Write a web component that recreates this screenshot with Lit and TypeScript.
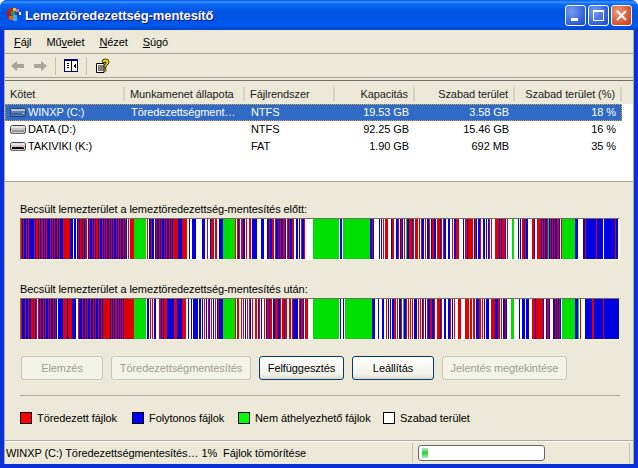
import { LitElement, css, html, svg } from 'lit';
import { customElement } from 'lit/decorators.js';

const COLORS: Record<string, string> = { r: '#e00000', b: '#0000e0', g: '#00e000', w: '#ffffff' };

// each section is [start x, runs]; later sections overwrite earlier pixels
type Section = [number, string];

const BEFORE: Section[] = [
  [21, 'r1 b1 r1 b2 r1 b1 r1'],
  [29, 'b5'],
  [34, 'r1 b1 r2 b1 r1 b1 r2 b1 r1 b1 r1 b1'],
  [48, 'b2 r1 b1 r1 b1 r1 b2'],
  [57, 'r1 b1 r1 b4'],
  [63, 'r7 b3 w1 b2 w1 b1'],
  [78, 'r1 b1 r2 b1 r1 b1 r2 w1'],
  [88, 'b1 r1 b2 r1 b1 r1 b1 r2 b1 r1 b2 r1 b1 r1 b1 r1 b2 r1 b1 r1 b1 r1 b2 r1 b1 r1 b1 r1 b2 r1 b1 r1 b1 w1 r1 w1 r1'],
  [131, 'r3'],
  [134, 'g12'],
  [146, 'w1 r1 w1 b2 r1 b2 w1'],
  [155, 'b1 r1 b2 r1 b1 r1 b2 r1 b1 r1 b2 r1 b1 r1 b1'],
  [173, 'r5 b4 r1 r4 w2 b1 w2 b4 w6 b3 w2 r1 w2 b1 r3 w1 r2 w1'],
  [219, 'b4'],
  [223, 'g12 r1 w1 r1 b1 r1 w1 r2 b2 w1 r1 w2 r2 w1 b5 w3 w1 b3 w3 b2 r1 b2 r2 w1 r1 b2 r1 b1 r1 b2 r2 b1 w1 r1 b1 r1 b2 r2 w2 b2 w1 b1 w1 r1 b2 r1 w1'],
  [313, 'g26 w1 b2 w1 g27 b2 r1 b1 w5 b1 w1 b1 w1 r1 w1 r3 w3 b1 r2 w2 b2 r1 w1 b1 r1 b1 w1 r1 w1 g1 b2 r3 b1 r1 w1 r3 w1 r1 w1 r1 b2 w1 r1 w1 b2 r1 w1 b1 r2 b2 w1 r3 b1 r1 w1 r1 b2 w2 b2 w2 r1 w1 b2 r3 w4 b1 w1 r2 b1 r2 r3 w1 b1 r1 b1 w1 b2 r1 w2 b2 w1 b1 w1 b1 r1 w1 r1 w3 r4 b1 r1 b1 r3 b1 w1 r1'],
  [512, 'g2 w4 b1 w1 b1 w1 r2 b1 r1 b2 w4 r2 b1 w2 r4 b1 r1 b1 r1 b1 b1 r1 g1 b1 r1 b1 r1 b1 r1 b2 r2 b1 w1 r1'],
  [562, 'g13 b3 w5 b2 r1 b10 r1 b6 w1 b11 r1 b2 w1'],
];

const AFTER: Section[] = [
  [21, 'r1 b3 r1 b2 r1 b2 r4 b1 r1 w1'],
  [38, 'r1 b1 r1 b2 r1 b1 r1 b2 r1 b1 r1 b2 r1 b1 r1 b1'],
  [58, 'b5 r4 b1 r4 b4 w1'],
  [78, 'r1 b3 r1 b2 r1 b1 r1 b2 r1 b2 r1 b1 r1 b2 r1 b2 r1 b1'],
  [103, 'r7 b1 r1 b1 r1 b1 r2 b1 r1 b1 r1 b1 r1 b1 r2 r9'],
  [134, 'g12 w1 b2 w1 r1 w1 r1 w1 b2 w2'],
  [159, 'r2 b1 r1 b1 r3 b7 r3 b5 r1 r3 w2 b1 w2 b1 w1 b4'],
  [197, 'b1 w1 b2 w1 b1 w1 r1 w1 b1 w1 r1 b1 w1 r1 w1 b1 w1 r1 w1 b1 r1 w1'],
  [219, 'b4'],
  [223, 'g12 r1 w1 r2 w2 r1 w1 r1 w1 b1 w1 r1 w1 r1 b1 w1 r1 w2 r2 w1 b1 r1 w1 b1 w2 r1 w1 b1 r2 b1 r2 w1 b2 r3 b2 r1 w1 r2 b1 r2 w2 r2 w1 r1 b5 w1 r1 b1 r2 b1 w1 r3 w1'],
  [313, 'g26 w1 b1 w2 b1 w1 g27 b3 w2 w1 b1 w3 b2 w2 r1 w1 b1 w1 b1 w1 b2 r2 w1 r1 w1 b2 r1 w1 g1 b2 r1 w1 r1 w1 r1 w1 r1 w1 b3 w1 r1 w1 r1 w1 b1 r1 w1 b1 w1 r1 b2 r2 b2 r1 w2 r3 b1 r1 w2 b2 w2 b2 r1 w1 b1 w1 r1 w3 r3 w4 r4 w1 r2 w1 r2 w1 b3 r2 w1 r1 w1 b1 w1 b3 w2 r3 r1 b3 r2 w1 r1 w1 b2 r1 b1'],
  [511, 'g3 w5 b1 w2 b3 w1 b3 w3 r3 b1 r7 b1 w2 b1 r2 b1 w3 b2 r1 b1 r1 b1 r1 b1 w1 r2 b1'],
  [562, 'g13 b3 g1 w1 r1 w4 b7 r2 b9 r1 b15'],
];

function paint(sections: Section[]) {
  const px: string[] = new Array(598).fill('w');
  for (const [start, runs] of sections) {
    let x = start - 21;
    for (const run of runs.split(' ')) {
      const n = parseInt(run.slice(1), 10);
      for (let i = 0; i < n && x < 598; i++) px[x++] = run[0];
    }
  }
  const rects: { x: number; w: number; c: string }[] = [];
  px.forEach((c, i) => {
    const last = rects[rects.length - 1];
    if (last && last.c === c) last.w++;
    else rects.push({ x: i, w: 1, c });
  });
  return rects;
}

const driveIcon = (light: string, dark: string, led: string, band: string) => html`
  <svg class="drive" width="17" height="13" viewBox="0 0 17 13">
    <rect x="0.5" y="2.5" width="15" height="8" rx="2" fill="${light}" stroke="#3a3f4a"></rect>
    <rect x="1" y="3" width="14" height="2" fill="#fff" opacity=".55"></rect>
    <rect x="2" y="7" width="12" height="2" fill="${band}"></rect>
    <rect x="12" y="7" width="2" height="1" fill="${led}"></rect>
    <rect x="1" y="10" width="14" height="1" fill="${dark}"></rect>
  </svg>
`;

@customElement('app-root')
export class AppRoot extends LitElement {
  static styles = css`
    :host {
      display: block;
      width: 638px;
      height: 468px;
      overflow: hidden;
      font-family: "Liberation Sans", Arial, sans-serif;
      font-size: 11px;
      letter-spacing: -0.08px;
      color: #000;
      background: #fff;
    }
    .window {
      height: 468px;
      box-sizing: border-box;
      display: flex;
      flex-direction: column;
      background: #0831d9;
      border-radius: 7px 7px 0 0;
      padding: 0 4px 4px;
    }
    .titlebar {
      flex: 0 0 30px;
      margin: 0 -4px;
      padding: 0 6px 0 6px;
      display: flex;
      align-items: center;
      border-radius: 7px 7px 0 0;
      background: linear-gradient(180deg, #0058ee 0%, #3a93ff 7%, #0a6af5 14%, #0055e5 35%, #0054e3 60%, #0058ee 85%, #0044cc 100%);
    }
    .app-icon { margin-right: 3px; }
    .title {
      flex: 1;
      font-weight: 700;
      font-size: 13px;
      color: #fff;
      text-shadow: 1px 1px 0 #0f1089;
      white-space: nowrap;
    }
    .caption-btn {
      width: 21px;
      height: 21px;
      box-sizing: border-box;
      margin-left: 2px;
      border: 1px solid #fff;
      border-radius: 3px;
      background: radial-gradient(circle at 30% 30%, #7a9cf0, #2f5fdc 70%, #2148c0);
      display: flex;
      align-items: center;
      justify-content: center;
    }
    .caption-btn.close { background: radial-gradient(circle at 30% 30%, #e99a80, #d8502a 70%, #b83c18); }
    .client {
      flex: 1;
      min-height: 0;
      display: flex;
      flex-direction: column;
      background: #ece9d8;
      border-left: 1px solid #aca899;
      border-right: 1px solid #aca899;
    }
    .menubar {
      flex: 0 0 24px;
      box-sizing: border-box;
      display: flex;
      align-items: center;
      padding-left: 9px;
      gap: 15px;
      border-bottom: 1px solid #aca899;
    }
    u { text-decoration-thickness: 1px; text-underline-offset: 1px; }
    .toolbar {
      flex: 0 0 24px;
      box-sizing: border-box;
      display: flex;
      align-items: center;
      padding-left: 6px;
      border-bottom: 1px solid #aca899;
    }
    .back { margin-right: 10px; }
    .tool-sep { width: 1px; height: 18px; background: #c5c2b2; margin: 0 8px; }
    .list {
      flex: 0 0 102px;
      box-sizing: border-box;
      margin-top: 2px;
      background: #fff;
      border-top: 1px solid #716f64;
      border-bottom: 1px solid #aca899;
      overflow: hidden;
    }
    .row, .head {
      display: grid;
      grid-template-columns: 120px 120px 90px 80px 100px 107px;
      width: 617px;
    }
    .head {
      height: 23px;
      background: #ece9d8;
      box-shadow: 30px 0 0 #ece9d8;
      align-items: center;
      padding-top: 3px;
      box-sizing: border-box;
    }
    .head div {
      height: 14px;
      line-height: 14px;
      padding: 0 5px;
      border-right: 2px solid #d6d2c2;
      white-space: nowrap;
      color: #222;
    }
    .head .num, .row .num { text-align: right; }
    .row {
      height: 17px;
      line-height: 17px;
      white-space: nowrap;
    }
    .row > div { padding: 0 6px; overflow: hidden; }
    .row .vol {
      display: flex;
      align-items: center;
      padding: 0 0 0 5px;
    }
    .row.sel { background: #316ac5; color: #fff; outline: 1px dotted #d8a848; outline-offset: -1px; }
    .drive { flex: none; margin-right: 1px; }
    .body {
      flex: 1;
      display: flex;
      flex-direction: column;
      padding: 18px 14px 0 15px;
    }
    .label { height: 18px; line-height: 18px; white-space: nowrap; }
    .bar {
      width: 600px;
      height: 42px;
      box-sizing: border-box;
      margin: 0 0 20px;
      border-top: 1px solid #716f64;
      border-left: 1px solid #716f64;
      border-bottom: 1px solid #fff;
      border-right: 1px solid #fff;
      display: block;
    }
    .bar svg { display: block; }
    .buttons { display: flex; gap: 8px; margin-top: -4px; padding-left: 1px; }
    .btn {
      height: 24px;
      box-sizing: border-box;
      border: 1px solid #003c74;
      border-radius: 3px;
      background: linear-gradient(180deg, #fff, #f3f2ea 80%, #dcd8c8);
      display: flex;
      align-items: center;
      justify-content: center;
    }
    .btn.off {
      border-color: #c9c7ba;
      background: #f4f3ea;
      color: #a19e8f;
    }
    .rule { height: 1px; background: #aca899; margin: 15px 0 15px; width: 600px; }
    .legend { display: flex; align-items: center; height: 13px; }
    .swatch { width: 12px; height: 12px; border: 1px solid #000; margin-right: 5px; box-sizing: border-box; }
    .legend-item { display: flex; align-items: center; white-space: nowrap; }
    .status {
      flex: 0 0 24px;
      box-sizing: border-box;
      display: flex;
      align-items: center;
      border-top: 1px solid #aca899;
      background: #ece9d8;
      box-shadow: inset 0 1px 0 #fff;
      white-space: nowrap;
    }
    .status-text { width: 408px; padding-left: 1px; box-sizing: border-box; border-right: 1px solid #c5c2b2; height: 20px; line-height: 20px; }
    .progress {
      width: 127px;
      height: 16px;
      box-sizing: border-box;
      margin-left: 5px;
      border: 1px solid #686868;
      border-radius: 3px;
      background: #fff;
      padding: 2px 3px;
    }
    .chunk { width: 6px; height: 10px; background: linear-gradient(180deg, #b2ecb8, #2bd13c 50%, #b2ecb8); }
    .status-end { margin-left: 84px; width: 1px; height: 20px; background: #c5c2b2; }
  `;

  private bar(sections: Section[]) {
    return html`<div class="bar">
      <svg width="598" height="40" viewBox="0 0 598 40" shape-rendering="crispEdges">
        ${paint(sections).map(
          (r) => svg`<rect x=${r.x} y="0" width=${r.w} height="40" fill=${COLORS[r.c]}></rect>`,
        )}
      </svg>
    </div>`;
  }

  render() {
    return html`
      <div class="window">
        <div class="titlebar">
          <svg class="app-icon" width="16" height="16" viewBox="0 0 16 16" shape-rendering="crispEdges">
            <rect x="3" y="1" width="4" height="4" fill="#d01818"></rect>
            <rect x="7" y="1" width="3" height="3" fill="#e8c020"></rect>
            <rect x="10" y="2" width="3" height="4" fill="#f060c0"></rect>
            <rect x="1" y="4" width="4" height="6" fill="#c01020"></rect>
            <rect x="5" y="4" width="4" height="4" fill="#20a040"></rect>
            <rect x="9" y="5" width="4" height="5" fill="#2040c0"></rect>
            <rect x="3" y="9" width="4" height="4" fill="#e06010"></rect>
            <rect x="7" y="8" width="4" height="6" fill="#40b0e0"></rect>
            <rect x="13" y="5" width="2" height="3" fill="#ffffff"></rect>
          </svg>
          <div class="title">Lemeztöredezettség-mentesítő</div>
          <div class="caption-btn">
            <svg width="13" height="13" viewBox="0 0 13 13"><rect x="2" y="9" width="7" height="3" fill="#fff"></rect></svg>
          </div>
          <div class="caption-btn">
            <svg width="13" height="13" viewBox="0 0 13 13">
              <rect x="1.5" y="2" width="10" height="9.5" fill="none" stroke="#fff"></rect>
              <rect x="1" y="1" width="11" height="2" fill="#fff"></rect>
            </svg>
          </div>
          <div class="caption-btn close">
            <svg width="13" height="13" viewBox="0 0 13 13">
              <path d="M2 2 L11 11 M11 2 L2 11" stroke="#fff" stroke-width="2"></path>
            </svg>
          </div>
        </div>
        <div class="client">
          <div class="menubar">
            <span><u>F</u>ájl</span>
            <span>Mű<u>v</u>elet</span>
            <span><u>N</u>ézet</span>
            <span><u>S</u>úgó</span>
          </div>
          <div class="toolbar">
            <svg class="back" width="13" height="12" viewBox="0 0 13 12"><path d="M0 6 L6 1 V4 H13 V8 H6 V11 Z" fill="#a8a598"></path></svg>
            <svg width="13" height="12" viewBox="0 0 13 12"><path d="M13 6 L7 1 V4 H0 V8 H7 V11 Z" fill="#a8a598"></path></svg>
            <div class="tool-sep"></div>
            <svg width="14" height="13" viewBox="0 0 14 13" shape-rendering="crispEdges">
              <rect x="0" y="0" width="14" height="13" fill="#000080"></rect>
              <rect x="1" y="2" width="12" height="10" fill="#fff"></rect>
              <rect x="7" y="2" width="1" height="10" fill="#000080"></rect>
              <rect x="3" y="4" width="2" height="1" fill="#000"></rect>
              <rect x="3" y="6" width="2" height="1" fill="#000"></rect>
              <rect x="3" y="8" width="2" height="1" fill="#000"></rect>
              <path d="M9 7 L12 4 V10 Z" fill="#000"></path>
            </svg>
            <div class="tool-sep"></div>
            <svg width="16" height="16" viewBox="0 0 16 16">
              <path d="M1.5 5.5 H9 V14.5 H1.5 Z" fill="#fff" stroke="#000"></path>
              <path d="M3 8 H8 M3 10 H8 M3 12 H8" stroke="#000"></path>
              <path d="M7 4 Q7 1 10.5 1 Q14 1 14 4 Q14 6 12 7 L11 8.5 V10 H9 V8 L10.5 6 Q11.5 5 11 4 H9.5 V5 Z" fill="#ffe000" stroke="#000" stroke-width=".8"></path>
              <rect x="9" y="11" width="2" height="2" fill="#ffe000" stroke="#000" stroke-width=".6"></rect>
            </svg>
          </div>
          <div class="list">
            <div class="head">
              <div>Kötet</div>
              <div>Munkamenet állapota</div>
              <div>Fájlrendszer</div>
              <div class="num">Kapacitás</div>
              <div class="num">Szabad terület</div>
              <div class="num">Szabad terület (%)</div>
            </div>
            <div class="row sel">
              <div class="vol">${driveIcon('#5a7fb8', '#26406e', '#7fd0a0', '#3b5f98')}WINXP (C:)</div>
              <div>Töredezettségment…</div>
              <div>NTFS</div>
              <div class="num">19.53 GB</div>
              <div class="num">3.58 GB</div>
              <div class="num">18 %</div>
            </div>
            <div class="row">
              <div class="vol">${driveIcon('#c8c8c8', '#6a6a6a', '#40c040', '#9a9a9a')}DATA (D:)</div>
              <div></div>
              <div>NTFS</div>
              <div class="num">92.25 GB</div>
              <div class="num">15.46 GB</div>
              <div class="num">16 %</div>
            </div>
            <div class="row">
              <div class="vol">${driveIcon('#c8c8c8', '#6a6a6a', '#e02020', '#000000')}TAKIVIKI (K:)</div>
              <div></div>
              <div>FAT</div>
              <div class="num">1.90 GB</div>
              <div class="num">692 MB</div>
              <div class="num">35 %</div>
            </div>
          </div>
          <div class="body">
            <div class="label">Becsült lemezterület a lemeztöredezettség-mentesítés előtt:</div>
            ${this.bar(BEFORE)}
            <div class="label">Becsült lemezterület a lemeztöredezettség-mentesítés után:</div>
            ${this.bar(AFTER)}
            <div class="buttons">
              <div class="btn off" style="width:82px">Elemzés</div>
              <div class="btn off" style="width:140px">Töredezettségmentesítés</div>
              <div class="btn" style="width:85px">Felfüggesztés</div>
              <div class="btn" style="width:82px">Leállítás</div>
              <div class="btn off" style="width:125px">Jelentés megtekintése</div>
            </div>
            <div class="rule"></div>
            <div class="legend">
              <div class="legend-item" style="width:112px"><div class="swatch" style="background:#ff0000"></div>Töredezett fájlok</div>
              <div class="legend-item" style="width:106px"><div class="swatch" style="background:#0000ff"></div>Folytonos fájlok</div>
              <div class="legend-item" style="width:145px"><div class="swatch" style="background:#00ff00"></div>Nem áthelyezhető fájlok</div>
              <div class="legend-item"><div class="swatch" style="background:#fff"></div>Szabad terület</div>
            </div>
          </div>
          <div class="status">
            <div class="status-text">WINXP (C:) Töredezettségmentesítés… 1%&nbsp;&nbsp;Fájlok tömörítése</div>
            <div class="progress"><div class="chunk"></div></div>
            <div class="status-end"></div>
          </div>
        </div>
      </div>
    `;
  }
}
